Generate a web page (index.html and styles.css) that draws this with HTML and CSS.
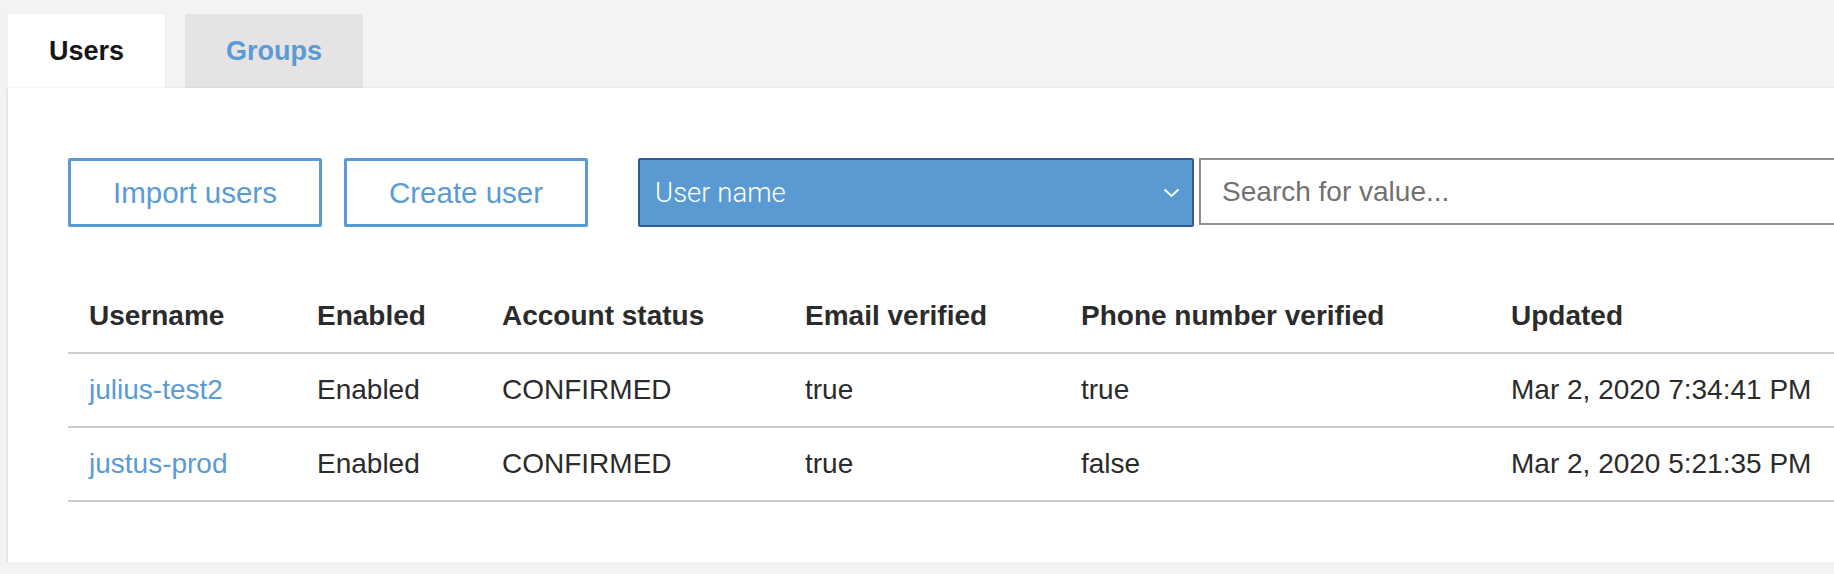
FILE: index.html
```html
<!DOCTYPE html>
<html lang="en">
<head>
<meta charset="utf-8">
<title>Users</title>
<link rel="stylesheet" href="styles.css">
</head>
<body>
<div class="page">
  <nav class="tabs">
    <div class="tab tab-active">Users</div>
    <div class="tab tab-inactive">Groups</div>
  </nav>
  <section class="panel">
    <div class="toolbar">
      <button class="btn">Import users</button>
      <button class="btn">Create user</button>
      <div class="filter">
        <div class="select">
          <span class="select-label">User name</span>
          <svg class="chevron" width="17" height="10" viewBox="0 0 17 10"><polyline points="1.5,1.5 8.5,8 15.5,1.5" fill="none" stroke="#ffffff" stroke-width="2"/></svg>
        </div>
        <input class="search" type="text" placeholder="Search for value...">
      </div>
    </div>
    <table class="users">
      <colgroup>
        <col class="c1"><col class="c2"><col class="c3"><col class="c4"><col class="c5"><col class="c6">
      </colgroup>
      <thead>
        <tr>
          <th>Username</th>
          <th>Enabled</th>
          <th>Account status</th>
          <th>Email verified</th>
          <th>Phone number verified</th>
          <th>Updated</th>
        </tr>
      </thead>
      <tbody>
        <tr>
          <td><a class="link" href="#">julius-test2</a></td>
          <td>Enabled</td>
          <td>CONFIRMED</td>
          <td>true</td>
          <td>true</td>
          <td>Mar 2, 2020 7:34:41 PM</td>
        </tr>
        <tr>
          <td><a class="link" href="#">justus-prod</a></td>
          <td>Enabled</td>
          <td>CONFIRMED</td>
          <td>true</td>
          <td>false</td>
          <td>Mar 2, 2020 5:21:35 PM</td>
        </tr>
      </tbody>
    </table>
  </section>
</div>
</body>
</html>
```
FILE: styles.css
```css
html, body {
  margin: 0;
  padding: 0;
  background: #f2f3f3;
  overflow: hidden;
  font-family: "Liberation Sans", Arial, sans-serif;
}

.page {
  width: 1900px;
  padding-top: 14px;
}

.tabs {
  display: flex;
  gap: 20px;
  padding-left: 8px;
}

.tab {
  height: 74px;
  padding: 0 41px;
  display: flex;
  align-items: center;
  font-size: 27px;
  font-weight: bold;
  border-radius: 2px 2px 0 0;
}

.tab-active {
  background: #ffffff;
  color: #161616;
  box-shadow: 0 0 2px rgba(0, 0, 0, 0.06);
}

.tab-inactive {
  background: #e5e3e4;
  color: #5a9bd5;
}

.panel {
  position: relative;
  margin-left: 8px;
  background: #ffffff;
  padding: 70px 0 60px 60px;
  box-shadow: 0 1px 3px rgba(0, 0, 0, 0.16), 0 0 1px rgba(0, 0, 0, 0.08);
}

.toolbar {
  display: flex;
  align-items: center;
}

.btn {
  flex-shrink: 0;
  white-space: nowrap;
  height: 69px;
  box-sizing: border-box;
  padding: 0 42px;
  margin-right: 22px;
  background: #ffffff;
  border: 3px solid #5a9bd5;
  border-radius: 2px;
  color: #5a9bd5;
  font-family: "Liberation Sans", Arial, sans-serif;
  font-size: 29.5px;
}

.filter {
  flex-shrink: 0;
  display: flex;
  gap: 5px;
  margin-left: 28px;
}

.select {
  width: 556px;
  height: 69px;
  box-sizing: border-box;
  background: #5a9ad2;
  border: 2px solid #2f5c92;
  border-radius: 2px;
  display: flex;
  align-items: center;
  justify-content: space-between;
  padding: 0 12px 0 15px;
}

.select-label {
  color: #ffffff;
  font-family: Roboto, "Liberation Sans", sans-serif;
  font-weight: 300;
  font-size: 27.5px;
}

.chevron {
  display: block;
}

.search {
  width: 700px;
  height: 67px;
  box-sizing: border-box;
  border: 2px solid #8f8f8f;
  padding: 0 21px;
  font-family: "Liberation Sans", Arial, sans-serif;
  font-size: 28px;
  color: #333333;
  outline: none;
}

.search::placeholder {
  color: #717171;
}

.users {
  margin-top: 52px;
  width: 1800px;
  border-collapse: collapse;
  table-layout: fixed;
  font-size: 28px;
  color: #2b2b2b;
}

.c1 { width: 228px; }
.c2 { width: 185px; }
.c3 { width: 303px; }
.c4 { width: 276px; }
.c5 { width: 430px; }

.users th,
.users td {
  text-align: left;
  padding: 0 0 0 21px;
  white-space: nowrap;
  border-bottom: 2px solid #cccccc;
}

.users th {
  height: 73px;
  font-weight: bold;
  color: #2b2b2b;
}

.users td {
  height: 72px;
}

.link {
  color: #5a9bd5;
  text-decoration: none;
}
```
